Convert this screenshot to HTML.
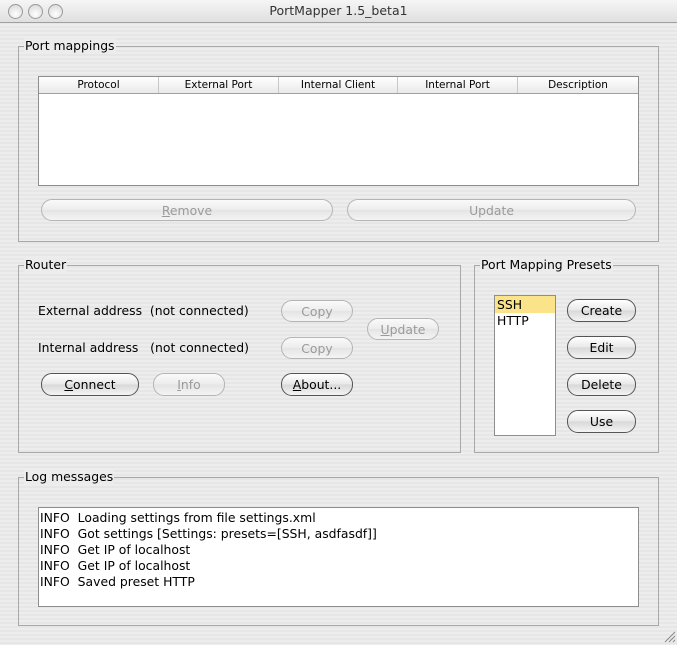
<!DOCTYPE html><html><head><style>
body{margin:0;width:677px;height:645px;overflow:hidden;font-family:"DejaVu Sans",sans-serif;font-size:12.4px;color:#000;position:relative;
background:repeating-linear-gradient(#ededed 0 2px,#e6e6e6 2px 4px);}
.a{position:absolute}
#tb{left:0;top:0;width:677px;height:22px;background:linear-gradient(#f6f6f6,#e0e0e0);border-bottom:1px solid #a0a0a0;text-align:center;line-height:22px;font-size:12.5px;color:#333}
.dot{position:absolute;top:4px;width:13px;height:13px;border-radius:50%;border:1px solid #9a9a9a;background:radial-gradient(circle at 50% 70%,#fff,#d4d4d4)}
.g{position:absolute;border:1px solid #a8a8a8;box-sizing:border-box}
.lb{position:absolute;background:#ececec;padding:0 1px;top:-9px;left:5px;font-size:12.4px}
.w{position:absolute;background:#fff;border:1px solid #8e8e8e;box-sizing:border-box}
.b{position:absolute;box-sizing:border-box;border:1px solid #555;border-radius:11px;background:linear-gradient(#fff 0%,#e8e8e8 50%,#d8d8d8 51%,#f4f4f4 100%);text-align:center;font-size:12.4px;line-height:21px}
.d{border-color:#b5b5b5;color:#9a9a9a;background:linear-gradient(#fafafa,#ececec 50%,#e4e4e4 51%,#f4f4f4)}
.h{position:absolute;top:0;height:16px;line-height:16px;text-align:center;font-size:10.5px;border-right:1px solid #c8c8c8;box-sizing:border-box}
</style></head><body>
<div id="tb" class="a">PortMapper 1.5_beta1</div>
<div class="dot" style="left:8px"></div><div class="dot" style="left:28px"></div><div class="dot" style="left:48px"></div>

<div class="g" style="left:18px;top:46px;width:641px;height:196px"><span class="lb">Port mappings</span></div>
<div class="w" style="left:38px;top:76px;width:601px;height:110px">
<div class="a" style="left:0;top:0;width:599px;height:16px;background:linear-gradient(#fff,#e9e9e9);border-bottom:1px solid #a0a0a0"></div>
<div class="h" style="left:0;width:120px">Protocol</div><div class="h" style="left:120px;width:120px">External Port</div><div class="h" style="left:240px;width:119px">Internal Client</div><div class="h" style="left:359px;width:120px">Internal Port</div><div class="h" style="left:479px;width:120px;border:0">Description</div>
</div>
<div class="b d" style="left:41px;top:199px;width:292px;height:22px"><u>R</u>emove</div>
<div class="b d" style="left:347px;top:199px;width:289px;height:22px">Update</div>

<div class="g" style="left:18px;top:265px;width:443px;height:188px"><span class="lb">Router</span></div>
<div class="a" style="left:38px;top:303px">External address&nbsp; (not connected)</div>
<div class="a" style="left:38px;top:340px">Internal address&nbsp;&nbsp; (not connected)</div>
<div class="b d" style="left:281px;top:300px;width:72px;height:22px">Copy</div>
<div class="b d" style="left:281px;top:337px;width:72px;height:22px">Copy</div>
<div class="b d" style="left:367px;top:318px;width:72px;height:22px"><u>U</u>pdate</div>
<div class="b" style="left:41px;top:373px;width:98px;height:23px"><u>C</u>onnect</div>
<div class="b d" style="left:153px;top:373px;width:72px;height:23px"><u>I</u>nfo</div>
<div class="b" style="left:281px;top:373px;width:72px;height:23px"><u>A</u>bout...</div>

<div class="g" style="left:474px;top:265px;width:185px;height:188px"><span class="lb">Port Mapping Presets</span></div>
<div class="w" style="left:494px;top:295px;width:62px;height:141px">
<div class="a" style="left:0;top:0;width:60px;height:17px;background:#fbe38a"></div>
<div class="a" style="left:2px;top:1px;line-height:16px">SSH<br>HTTP</div></div>
<div class="b" style="left:567px;top:299px;width:69px;height:23px">Create</div>
<div class="b" style="left:567px;top:336px;width:69px;height:23px">Edit</div>
<div class="b" style="left:567px;top:373px;width:69px;height:23px">Delete</div>
<div class="b" style="left:567px;top:410px;width:69px;height:23px">Use</div>

<div class="g" style="left:18px;top:477px;width:641px;height:149px"><span class="lb">Log messages</span></div>
<div class="w" style="left:38px;top:507px;width:601px;height:100px">
<div class="a" style="left:1px;top:2px;line-height:16px">INFO&nbsp; Loading settings from file settings.xml<br>INFO&nbsp; Got settings [Settings: presets=[SSH, asdfasdf]]<br>INFO&nbsp; Get IP of localhost<br>INFO&nbsp; Get IP of localhost<br>INFO&nbsp; Saved preset HTTP</div></div>
<svg class="a" style="left:664px;top:631px" width="12" height="12"><path d="M1 11L11 1M5 11L11 5M9 11L11 9" stroke="#888" stroke-width="1"/></svg>
</body></html>
